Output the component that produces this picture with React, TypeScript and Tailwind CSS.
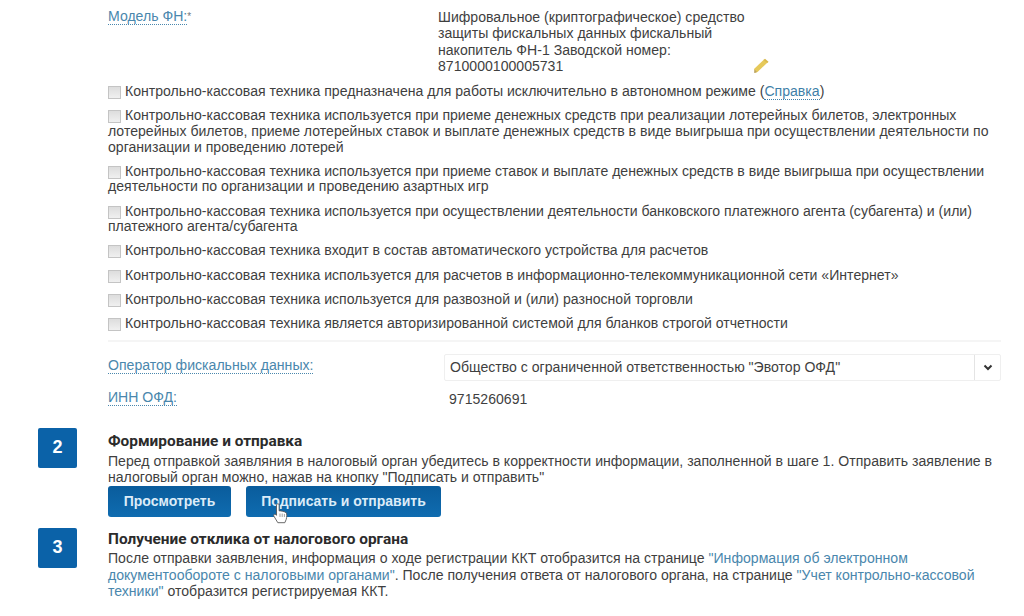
const rows: React.ReactNode[] = [
  <>Контрольно-кассовая техника предназначена для работы исключительно в автономном режиме (<a className="text-[#3f7fa8] border-b border-dotted border-[#3f7fa8]">Справка</a>)</>,
  <>Контрольно-кассовая техника используется при приеме денежных средств при реализации лотерейных билетов, электронных лотерейных билетов, приеме лотерейных ставок и выплате денежных средств в виде выигрыша при осуществлении деятельности по организации и проведению лотерей</>,
  <>Контрольно-кассовая техника используется при приеме ставок и выплате денежных средств в виде выигрыша при осуществлении деятельности по организации и проведению азартных игр</>,
  <>Контрольно-кассовая техника используется при осуществлении деятельности банковского платежного агента (субагента) и (или) платежного агента/субагента</>,
  <>Контрольно-кассовая техника входит в состав автоматического устройства для расчетов</>,
  <>Контрольно-кассовая техника используется для расчетов в информационно-телекоммуникационной сети «Интернет»</>,
  <>Контрольно-кассовая техника используется для развозной и (или) разносной торговли</>,
  <>Контрольно-кассовая техника является авторизированной системой для бланков строгой отчетности</>,
];

function Step({ n }: { n: string }) {
  return (
    <div className="w-[39px] h-[40px] shrink-0 rounded-[2px] bg-[#0b62a8] text-white text-[18px] font-bold flex items-center justify-center">
      {n}
    </div>
  );
}

function Btn({ children, w }: { children: React.ReactNode; w: string }) {
  return (
    <div className={`${w} h-[31px] rounded-[3px] bg-gradient-to-b from-[#0a5c9c] to-[#0f6cb0] text-[#dcecf8] text-[14px] font-bold flex items-center justify-center`}>
      {children}
    </div>
  );
}

export default function App() {
  return (
    <div className="w-[1024px] h-[616px] overflow-hidden bg-white text-[#3f3f3f] text-[14.08px] leading-[15.6px] font-['Liberation_Sans',Arial,sans-serif] pl-[38px] pr-[23px] pt-[9px]">
      <div className="pl-[70px]">
        <div className="flex">
          <div className="w-[330px]">
            <span className="text-[#4a87ad] border-b border-dotted border-[#4a87ad]">Модель ФН:</span>
            <span className="text-[#777] text-[10px] align-top">*</span>
          </div>
          <div className="relative w-[315px] leading-[16.3px]">
            Шифровальное (криптографическое) средство защиты фискальных данных фискальный накопитель ФН-1 Заводской номер: 8710000100005731
            <svg className="absolute left-[314px] top-[48px]" width="18" height="18" viewBox="0 0 18 18">
              <path d="M3 16 L2 12 L12 2.5 L15.5 5.5 L5.5 15 Z" fill="#e6c95a" />
              <path d="M2 16 L2.6 12.6 L5 15 Z" fill="#b9a36a" />
              <path d="M11.5 3 L13 1.8 L16.5 4.8 L15.5 6 Z" fill="#d8b84a" />
            </svg>
          </div>
        </div>

        <div className="mt-[10px] flex flex-col gap-[8.6px]">
          {rows.map((r, i) => (
            <div key={i}>
              <span className="inline-block w-[13px] h-[13px] mr-[4px] align-[-3px] border border-[#c4c4c4] bg-gradient-to-b from-[#dddddd] to-[#f0f0f0]" />
              {r}
            </div>
          ))}
        </div>

        <div className="mt-[9px] h-[2px] bg-[#f5f5f5]" />

        <div className="mt-[12px] flex items-center">
          <div className="w-[336px] pb-[4px]">
            <span className="text-[#4a87ad] border-b border-dotted border-[#4a87ad]">Оператор фискальных данных:</span>
          </div>
          <div className="flex w-[557px] h-[27px] items-center border border-[#efefef] rounded-[2px]">
            <div className="flex-1 pl-[5px] border-r border-[#e4e4e4] h-full flex items-center">Общество с ограниченной ответственностью "Эвотор ОФД"</div>
            <div className="w-[25px] flex justify-center">
              <svg width="10" height="7" viewBox="0 0 10 7"><path d="M1.5 1.5 L5 5 L8.5 1.5" fill="none" stroke="#333" strokeWidth="2" /></svg>
            </div>
          </div>
        </div>

        <div className="mt-[9px] flex">
          <div className="w-[341px]">
            <span className="text-[#4a87ad] border-b border-dotted border-[#4a87ad]">ИНН ОФД:</span>
          </div>
          <div className="pt-[2px]">9715260691</div>
        </div>
      </div>

      <div className="mt-[20px] flex gap-[31px]">
        <Step n="2" />
        <div className="w-[888px] pt-[5px]">
          <div className="text-[15.4px] font-bold leading-[16px] text-[#2b2b2b] font-['Roboto','Liberation_Sans',sans-serif]">Формирование и отправка</div>
          <div className="mt-[5px]">Перед отправкой заявляния в налоговый орган убедитесь в корректности информации, заполненной в шаге 1. Отправить заявление в налоговый орган можно, нажав на кнопку "Подписать и отправить"</div>
          <div className="mt-[1px] flex gap-[15px] relative">
            <Btn w="w-[123px]">Просмотреть</Btn>
            <Btn w="w-[195px]">Подписать и отправить</Btn>
            <svg className="absolute left-[163px] top-[17px]" width="18" height="21" viewBox="0 0 20 24">
              <path d="M6 2 C6 0.5 9 0.5 9 2 L9 9 L11 9 L13 9.5 L15 10 L17 11 C18 12 18 16 17 19 L15.5 22.5 L7.5 22.5 L3 15 C2 13 4 12 6 14 Z" fill="#fff" stroke="#555" strokeWidth="1" />
              <path d="M10 12 V16 M12.5 12 V16 M15 12.5 V16" stroke="#777" strokeWidth="0.8" />
            </svg>
          </div>
        </div>
      </div>

      <div className="mt-[11px] flex gap-[31px]">
        <Step n="3" />
        <div className="w-[888px] pt-[3px]">
          <div className="text-[15.4px] font-bold leading-[16px] text-[#2b2b2b] font-['Roboto','Liberation_Sans',sans-serif]">Получение отклика от налогового органа</div>
          <div className="mt-[3px] w-[880px] leading-[16.3px]">
            После отправки заявления, информация о ходе регистрации ККТ отобразится на странице <span className="text-[#4a87ad]">"Информация об электронном документообороте с налоговыми органами"</span>. После получения ответа от налогового органа, на странице <span className="text-[#4a87ad]">"Учет контрольно-кассовой техники"</span> отобразится регистрируемая ККТ.
          </div>
        </div>
      </div>
    </div>
  );
}
